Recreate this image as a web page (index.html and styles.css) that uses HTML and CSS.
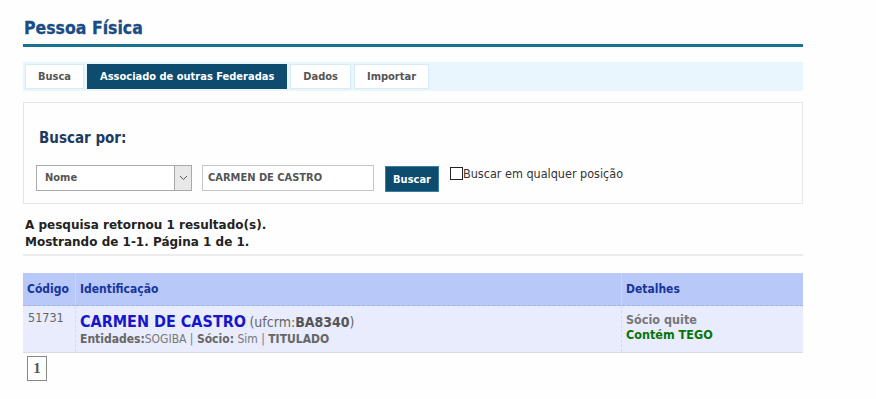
FILE: index.html
```html
<!DOCTYPE html>
<html lang="pt">
<head>
<meta charset="utf-8">
<title>Pessoa Física</title>
<link rel="stylesheet" href="styles.css">
</head>
<body>
<div class="page">
  <h1 class="title">Pessoa Física</h1>
  <div class="tabs">
    <span class="tab">Busca</span>
    <span class="tab active">Associado de outras Federadas</span>
    <span class="tab">Dados</span>
    <span class="tab">Importar</span>
  </div>
  <div class="search">
    <div class="search-label">Buscar por:</div>
    <div class="search-row">
      <div class="select"><span class="select-text">Nome</span><span class="select-arrow"><svg width="9" height="6" viewBox="0 0 9 6"><path d="M1 1 L4.5 4.5 L8 1" fill="none" stroke="#555" stroke-width="1"/></svg></span></div>
      <div class="input">CARMEN DE CASTRO</div>
      <span class="btn">Buscar</span>
      <label class="check"><span class="box"></span>Buscar em qualquer posição</label>
    </div>
  </div>
  <div class="summary">
    <div>A pesquisa retornou 1 resultado(s).</div>
    <div>Mostrando de 1-1. Página 1 de 1.</div>
  </div>
  <table class="results">
    <thead>
      <tr><th class="c1">Código</th><th class="c2">Identificação</th><th class="c3">Detalhes</th></tr>
    </thead>
    <tbody>
      <tr>
        <td class="c1 code">51731</td>
        <td class="c2">
          <div><span class="name">CARMEN DE CASTRO</span> <span class="uf">(ufcrm:<b>BA8340</b>)</span></div>
          <div class="meta"><b>Entidades:</b>SOGIBA | <b>Sócio:</b> Sim | <b>TITULADO</b></div>
        </td>
        <td class="c3">
          <div class="quite">Sócio quite</div>
          <div class="tego">Contém TEGO</div>
        </td>
      </tr>
    </tbody>
  </table>
  <div class="pager"><span class="pg">1</span></div>
</div>
</body>
</html>
```

FILE: styles.css
```css
html, body {
  margin: 0;
  padding: 0;
  background: #fefefe;
}
body {
  font-family: "DejaVu Sans Condensed", "DejaVu Sans", sans-serif;
  font-size: 12px;
  color: #333;
}
.page {
  width: 780px;
  margin-left: 23px;
  padding-top: 17px;
}
.title {
  margin: 0;
  font-size: 17.5px;
  font-weight: bold;
  color: #1a4c85;
  line-height: 23px;
  padding-left: 1px;
  padding-bottom: 4px;
  border-bottom: 3px solid #17718f;
  -webkit-text-stroke: 0.3px #1a4c85;
}
.tabs {
  margin-top: 15px;
  background: #eaf6fd;
  height: 29px;
  display: flex;
  align-items: center;
  gap: 3px;
  padding-left: 2px;
}
.tab {
  box-sizing: border-box;
  height: 25px;
  line-height: 23px;
  border: 1px solid #d5ebf8;
  background: #fff;
  color: #555;
  font-weight: bold;
  font-size: 11px;
  padding: 0 12px;
}
.tab.active {
  background: #0d4b6f;
  border-color: #0d4b6f;
  color: #fff;
}
.search {
  margin-top: 11px;
  border: 1px solid #e6e6e6;
  height: 102px;
  box-sizing: border-box;
  padding: 26px 12px 0 12px;
}
.search-label {
  font-size: 15px;
  font-weight: bold;
  color: #1c3b5f;
  padding-left: 3px;
  line-height: 18px;
}
.search-row {
  display: flex;
  align-items: flex-start;
  margin-top: 18px;
}
.select {
  box-sizing: border-box;
  width: 156px;
  height: 26px;
  border: 1px solid #a9a9a9;
  display: flex;
  background: #fff;
}
.select-text {
  flex: 1;
  font-size: 11px;
  font-weight: bold;
  color: #555;
  line-height: 24px;
  padding-left: 8px;
}
.select-arrow {
  width: 16px;
  background: #e8e8e8;
  border-left: 1px solid #a9a9a9;
  display: flex;
  align-items: center;
  justify-content: center;
}
.input {
  box-sizing: border-box;
  width: 172px;
  height: 26px;
  margin-left: 10px;
  border: 1px solid #c6c6c6;
  font-size: 11px;
  font-weight: bold;
  color: #555;
  line-height: 24px;
  padding-left: 5px;
  background: #fff;
}
.btn {
  box-sizing: border-box;
  margin-left: 11px;
  width: 54px;
  height: 26px;
  margin-top: 1px;
  background: #0d4b6f;
  color: #fff;
  font-size: 11px;
  font-weight: bold;
  text-align: center;
  line-height: 26px;
  border: 1px solid #3a7ea3;
}
.check {
  display: flex;
  align-items: flex-start;
  margin-left: 11px;
  font-size: 12.5px;
  color: #333;
  line-height: 16px;
  margin-top: 1px;
}
.box {
  width: 11px;
  height: 11px;
  border: 1px solid #222;
  margin-top: 1px;
  background: #fff;
}
.summary {
  margin-top: 13px;
  padding-left: 2px;
  font-family: "DejaVu Sans", sans-serif;
  font-weight: bold;
  color: #222;
  line-height: 17px;
  padding-bottom: 3px;
  border-bottom: 2px solid #ececec;
}
.results {
  margin-top: 17px;
  width: 780px;
  border-collapse: collapse;
}
.results th {
  background: #b7c8f9;
  color: #19349b;
  text-align: left;
  font-weight: bold;
  height: 32px;
  padding: 0 4px;
  border-bottom: 1px dashed #9fb3e6;
  border-left: 1px solid #c9d5f7;
}
.results th:first-child,
.results td:first-child {
  border-left: none;
}
.results td {
  background: #e8ecfd;
  vertical-align: top;
  padding: 6px 4px 6px;
  border-left: 1px dashed #d5dbee;
  border-bottom: 1px solid #d8dbe6;
}
.c1 { width: 43px; }
.c3 { width: 173px; }
.code {
  color: #666;
  font-size: 12.5px;
  padding-left: 5px !important;
  padding-top: 4px !important;
}
.name {
  color: #1717c9;
  font-size: 16px;
  font-weight: bold;
}
.uf {
  color: #666;
  font-size: 14px;
}
.uf b { color: #555; }
.meta {
  color: #777;
  margin-top: 1px;
}
.meta b { color: #666; }
.quite {
  color: #777;
  font-weight: bold;
  font-size: 12.5px;
  line-height: 15px;
  margin-top: 0px;
}
.tego {
  color: #087408;
  font-weight: bold;
  font-size: 12.5px;
  line-height: 15px;
}
.pager {
  padding: 3px 0 0 4px;
}
.pg {
  display: inline-block;
  box-sizing: border-box;
  width: 20px;
  height: 25px;
  border: 1px solid #888;
  text-align: center;
  font-family: "Liberation Serif", "DejaVu Serif", serif;
  font-weight: bold;
  font-size: 15px;
  line-height: 23px;
  color: #555;
}
```
